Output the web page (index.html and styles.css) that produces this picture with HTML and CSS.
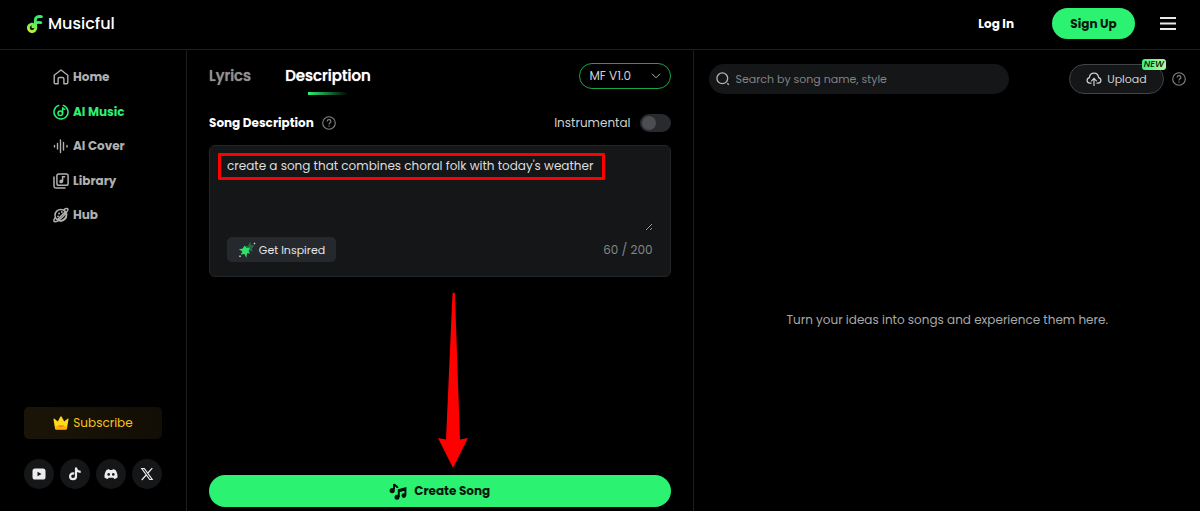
FILE: index.html
```html
<!DOCTYPE html>
<html lang="en">
<head>
    <meta charset="UTF-8">
    <meta name="viewport" content="width=device-width, initial-scale=1.0">
    <title>Musicful - AI Music</title>
    <link rel="stylesheet" href="styles.css">
</head>
<body>
    <header class="header">
        <a class="logo" href="#">
            <svg width="16" height="18" viewBox="0 0 16 18" fill="none">
                <defs>
                    <linearGradient id="logo-fill" x1="0" y1="18" x2="8" y2="0" gradientUnits="userSpaceOnUse">
                        <stop offset="0.1" stop-color="#c4f030"/>
                        <stop offset="0.8" stop-color="#35ee6e"/>
                    </linearGradient>
                </defs>
                <path d="M14.4 1.6C10.8 1.2 8.4 2 8.3 5.4L8.8 12.600a3.700 3.700 0 1 1-4.200-3.500c1.500-.2 2.300 1.300 1.300 2.700M13.800 7.600C12 7.200 9.800 7.300 8.400 8.400" stroke="url(#logo-fill)" stroke-width="2.900" stroke-linecap="round"/>
            </svg>
            <span>Musicful</span>
        </a>
        <div class="header-actions">
            <button class="btn-login">Log In</button>
            <button class="btn-signup">Sign Up</button>
            <button class="btn-menu" aria-label="Menu">
                <svg width="16" height="13" viewBox="0 0 16 13" stroke="#e8e8e8" stroke-width="1.800">
                    <path d="M0 1h16M0 6.500h16M0 12h16"/>
                </svg>
            </button>
        </div>
    </header>

    <div class="layout">
        <aside class="sidebar">
            <nav class="nav">
                <a class="nav-item" href="#">
                    <svg width="16" height="16" viewBox="0 0 16 16" fill="none" stroke="currentColor" stroke-width="1.4" stroke-linejoin="round">
                        <path d="M1.2 6.2 8 1l6.8 5.2v7.2q0 1.3-1.3 1.3h-2.6V10q0-1.500-1.500-1.500H6.6Q5.1 8.500 5.1 10v4.700H2.500q-1.300 0-1.300-1.300z"/>
                    </svg>
                    <span>Home</span>
                </a>
                <a class="nav-item active" href="#">
                    <svg width="16" height="16" viewBox="0 0 16 16" fill="none" stroke="currentColor" stroke-width="1.5" stroke-linecap="round">
                        <path d="M10.3 1.4A7 7 0 1 1 5.7 1.4M13.1 3.2l.5.6"/>
                        <circle cx="7.3" cy="9.2" r="2.3"/>
                        <path d="M9.6 9.2V3.3c.1 1.3 1 1.9 2.2 2"/>
                    </svg>
                    <span>AI Music</span>
                </a>
                <a class="nav-item" href="#">
                    <svg width="16" height="16" viewBox="0 0 16 16" stroke="currentColor" stroke-width="1.4" stroke-linecap="round">
                        <path d="M1.500 7.500v1.500M4.500 5.500v5.500M7.500 2v12.500M10.500 4.500v7.500M14 7.500v1.500"/>
                    </svg>
                    <span>AI Cover</span>
                </a>
                <a class="nav-item" href="#">
                    <svg width="16" height="16" viewBox="0 0 16 16" fill="none" stroke="currentColor" stroke-width="1.5" stroke-linecap="round">
                        <rect x="3.9" y="1" width="11.2" height="11.2" rx="1.8"/>
                        <path d="M1 4v9.3q0 1.7 1.7 1.7H12M9.6 8V3.8h2"/>
                        <circle cx="8.2" cy="8.4" r="1.1" fill="currentColor"/>
                    </svg>
                    <span>Library</span>
                </a>
                <a class="nav-item" href="#">
                    <svg width="16" height="16" viewBox="0 0 16 16" fill="none" stroke="currentColor" stroke-width="1.5" stroke-linecap="round">
                        <circle cx="7.8" cy="8.2" r="5.8"/>
                        <path d="M11 2.600c2-1.200 3.500-1.300 3.900-.6.900 1.700-8.500 12.500-13 12.800C.5 14.700.6 13 2 11M13.500 7c0 3.500-3 6-6 7M4.500 12.500 12.500 4.500"/>
                        <path d="M6 6.500h.1M8.800 5h.1M5 9.300h.1" stroke-width="1.800"/>
                    </svg>
                    <span>Hub</span>
                </a>
            </nav>

            <div class="sidebar-footer">
                <button class="btn-subscribe">
                    <svg width="16" height="14" viewBox="0 0 16 14">
                        <path d="M2 12.500 0.500 3.200q0-1 1-.5L4.800 5.400 7.300.8q.7-.9 1.400 0l2.500 4.600 3.300-2.700q1-.5 1 .5L14 12.500q-.2 1-1.200 1H3.200q-1 0-1.200-1z" fill="#ffd91c"/>
                        <path d="M2 10.500q6-1.500 12.200 0l-.2 2q-.2 1-1.200 1H3.200q-1 0-1.200-1z" fill="#ffb300"/>
                        <path d="M5.500 9.500q2.500 1.400 5 0" stroke="#f26b1d" stroke-width="1.400" fill="none"/>
                    </svg>
                    <span>Subscribe</span>
                </button>
                <div class="social">
                    <a href="#" aria-label="YouTube">
                        <svg width="14" height="14" viewBox="0 0 14 14">
                            <rect x="0.500" y="1.500" width="13" height="11" rx="2.600" fill="#ececec"/>
                            <path d="M5.500 4.700v4.600L9.500 7z" fill="#16181a"/>
                        </svg>
                    </a>
                    <a href="#" aria-label="TikTok">
                        <svg width="14" height="14" viewBox="0 0 14 14" fill="none" stroke="#ececec" stroke-width="2.200">
                            <path d="M6.200 6.600C3.500 6 1.900 7.800 2.100 9.600c.3 3.500 5.900 3.500 5.900-.3V.5M8 .8c.3 2.500 2 3.900 4.700 4"/>
                        </svg>
                    </a>
                    <a href="#" aria-label="Discord">
                        <svg width="14" height="14" viewBox="0 0 14 14">
                            <path d="M2.500 3 5 2l.6 1h2.800L9 2l2.500 1c1.500 2.200 2.200 4.800 2 7.400-1 .9-2 1.400-3.300 1.700l-.8-1.300H4.600l-.8 1.300C2.500 11.800 1.500 11.300.5 10.400.3 7.800 1 5.200 2.500 3z" fill="#ececec"/>
                            <circle cx="4.700" cy="7.400" r="1.300" fill="#16181a"/>
                            <circle cx="9.300" cy="7.400" r="1.300" fill="#16181a"/>
                        </svg>
                    </a>
                    <a href="#" aria-label="X">
                        <svg width="14" height="14" viewBox="0 0 14 14" fill="none" stroke="#ececec">
                            <path d="M1.800 1.500h2.500l7.900 11H9.700zM12.300 1.200 7.900 6M6.200 8l-4.500 5" stroke-width="1.200"/>
                        </svg>
                    </a>
                </div>
            </div>
        </aside>

        <main class="creator">
            <div class="creator-top">
                <div class="tabs" role="tablist">
                    <button class="tab" role="tab">Lyrics</button>
                    <button class="tab active" role="tab" aria-selected="true">Description</button>
                </div>
                <div class="model-select">
                    <select aria-label="Model">
                        <option>MF V1.0</option>
                    </select>
                    <svg width="10" height="6" viewBox="0 0 10 6" fill="none" stroke="#b0b0b0">
                        <path d="M1 .8 5 4.800 9 .8"/>
                    </svg>
                </div>
            </div>

            <div class="field-head">
                <label class="field-label" for="description">Song Description</label>
                <svg class="help" width="14" height="14" viewBox="0 0 14 14" fill="none" stroke="currentColor" stroke-width="1.100">
                    <circle cx="7" cy="7" r="6.300"/>
                    <path d="M5.100 5.500C5.200 3 8.900 3.100 8.900 5.400 8.900 6.800 7 6.800 7 8.400M7 9.600v1.200"/>
                </svg>
                <label class="instrumental">
                    <span>Instrumental</span>
                    <input type="checkbox" class="switch">
                </label>
            </div>

            <div class="prompt">
                <textarea id="description" maxlength="200" spellcheck="false">create a song that combines choral folk with today's weather</textarea>
                <div class="highlight"></div>
                <div class="prompt-footer">
                    <button class="btn-inspire">
                        <svg width="18" height="18" viewBox="0 0 18 18">
                            <path d="m12 1 1.400 3 3 .6-2.400 3 .6 3-3-.8-2.800 2V8L6 5.500l4-.8z" fill="#27684a"/>
                            <path d="m6.500 4.500 2 2.500 3.500-.3-1.500 3 1.500 2.800-3-.3L8.300 17l-1.800-4-3.700.5 1.500-3L.8 8.200l4-.7z" fill="#2fe06b"/>
                            <path d="M2 14.200l1 1-1 1-1-1zM16.500 1.500l1 1-1 1-1-1z" fill="#dcdcdc"/>
                        </svg>
                        <span>Get Inspired</span>
                    </button>
                    <span class="counter">60 / 200</span>
                </div>
            </div>

            <svg class="arrow" width="30" height="176" viewBox="0 0 30 176" fill="#fe0000">
                <path d="M14.500 1.500q1.200-2 2.400 0L22 147.500l8-1.500-15 30L0 146l8 1.500z"/>
            </svg>

            <button class="btn-create">
                <svg width="18" height="18" viewBox="0 0 18 18" fill="none" stroke="#06140b" stroke-width="2">
                    <path d="M5 7.500V2c.5 1.700 3.500 1.500 3.500 4M9.800 15V8l6.600-1.800v7.300M9.800 9.400l6.600-1.800"/>
                    <circle cx="3.200" cy="8.600" r="1.600" fill="#06140b"/>
                    <circle cx="8" cy="15.200" r="1.500" fill="#06140b"/>
                    <circle cx="14.800" cy="13.600" r="1.300" fill="#06140b"/>
                </svg>
                <span>Create Song</span>
            </button>
        </main>

        <section class="songs">
            <div class="songs-top">
                <label class="search">
                    <svg width="14" height="14" viewBox="0 0 14 14" fill="none" stroke="#b4b6b8" stroke-width="1.300">
                        <circle cx="6.300" cy="6.300" r="5.400"/>
                        <path d="m11.300 11.300 1.500 1.500"/>
                    </svg>
                    <input type="text" placeholder="Search by song name, style" aria-label="Search">
                </label>
                <div class="upload">
                    <button class="btn-upload">
                        <svg width="16" height="14" viewBox="0 0 16 14" fill="none" stroke="currentColor" stroke-width="1.200" stroke-linecap="round">
                            <path d="M5 11.200H4C.3 11 .2 6.500 3.400 5.600 4 -.4 12-.4 12.600 5.600c3.200.9 3.100 5.400-.6 5.600h-1M8 13.400V6.500M5.600 8.800 8 6.300l2.400 2.500"/>
                        </svg>
                        <span>Upload</span>
                    </button>
                    <span class="badge">NEW</span>
                    <svg class="help" width="14" height="14" viewBox="0 0 14 14" fill="none" stroke="currentColor" stroke-width="1.100">
                        <circle cx="7" cy="7" r="6.300"/>
                        <path d="M5.100 5.500C5.200 3 8.900 3.100 8.900 5.400 8.900 6.800 7 6.800 7 8.400M7 9.600v1.200"/>
                    </svg>
                </div>
            </div>
            <p class="empty">Turn your ideas into songs and experience them here.</p>
        </section>
    </div>
</body>
</html>
```
FILE: styles.css
```css
* {
    box-sizing: border-box;
}
body {
    margin: 0;
    min-height: 100vh;
    display: flex;
    flex-direction: column;
    background: #000;
    color: #fff;
    font-family: Poppins, Inter, sans-serif;
    font-size: 12px;
    line-height: 18px;
}
a {
    color: inherit;
    text-decoration: none;
}
button, input, select, textarea {
    font: inherit;
    color: inherit;
}
button {
    border: none;
    padding: 0;
    background: none;
    cursor: pointer;
}
svg {
    flex: none;
    display: block;
}

/* Header */
.header {
    display: flex;
    align-items: center;
    justify-content: space-between;
    height: 50px;
    padding: 0 24px 2px 27px;
    border-bottom: 1px solid #1c1f20;
}
.logo {
    display: flex;
    align-items: center;
    gap: 5px;
    font-size: 16px;
    font-weight: 500;
}
.header-actions {
    display: flex;
    align-items: center;
}
.btn-login {
    font-weight: 700;
}
.btn-signup {
    width: 83px;
    height: 31px;
    margin: 0 25px 0 38px;
    border-radius: 16px;
    background: #2cf272;
    color: #06140b;
    font-weight: 700;
}

/* Columns */
.layout {
    flex: 1;
    display: grid;
    grid-template-columns: 187px 1fr 1fr;
}
.sidebar, .creator {
    border-right: 1px solid #1c1f20;
}

/* Sidebar */
.sidebar {
    display: flex;
    flex-direction: column;
    justify-content: space-between;
    padding: 15px 24px 22px;
}
.nav {
    display: flex;
    flex-direction: column;
    justify-content: space-between;
    height: 162px;
    padding-left: 29px;
}
.nav-item {
    display: flex;
    align-items: center;
    gap: 4px;
    height: 24px;
    color: #b0b0b0;
    font-weight: 700;
}
.nav-item.active {
    color: #2cf272;
}
.btn-subscribe {
    display: flex;
    align-items: center;
    justify-content: center;
    gap: 4px;
    width: 100%;
    height: 32px;
    margin-bottom: 20px;
    border-radius: 5px;
    background: linear-gradient(90deg, #1b1508, #120e05);
    color: #f5c31c;
}
.social {
    display: flex;
    justify-content: space-between;
}
.social a {
    display: flex;
    align-items: center;
    justify-content: center;
    width: 30px;
    height: 30px;
    border-radius: 50%;
    background: #141618;
}

/* Song form */
.creator {
    position: relative;
    display: flex;
    flex-direction: column;
    padding: 13px 22px 4px;
}
.creator-top {
    display: flex;
    align-items: flex-start;
    justify-content: space-between;
}
.tabs {
    display: flex;
    gap: 34px;
}
.tab {
    height: 32px;
    padding-bottom: 6px;
    color: #929292;
    font-size: 15px;
    font-weight: 500;
    text-shadow: 0 0 1px currentColor;
}
.tab.active {
    color: #fff;
    background: linear-gradient(90deg, #2cf272, #000) center bottom / 40px 3px no-repeat;
}
.model-select {
    position: relative;
}
.model-select select {
    display: block;
    appearance: none;
    width: 92px;
    height: 26px;
    padding: 0 24px 0 10px;
    border: 1px solid #18a548;
    border-radius: 13px;
    background: #000;
    color: #d0d0d0;
}
.model-select svg {
    position: absolute;
    right: 10px;
    top: 10px;
    pointer-events: none;
}
.help {
    color: #858585;
}
.field-head {
    display: flex;
    align-items: center;
    gap: 8px;
    height: 20px;
    margin: 18px 0 12px;
}
.field-label {
    font-weight: 700;
}
.instrumental {
    display: flex;
    align-items: center;
    gap: 9px;
    margin-left: auto;
    color: #d0d0d0;
}
.switch {
    appearance: none;
    width: 31px;
    height: 18px;
    margin: 0;
    padding: 2px;
    border-radius: 9px;
    background: #282a2e;
}
.switch::before {
    content: "";
    display: block;
    width: 14px;
    height: 14px;
    border-radius: 50%;
    background: #4b4d52;
}
.prompt {
    position: relative;
    padding: 11px 17px 14px;
    border: 1px solid #222527;
    border-radius: 6px;
    background: #141618;
}
.prompt textarea {
    display: block;
    width: 100%;
    height: 74px;
    padding: 0;
    border: none;
    outline: none;
    resize: vertical;
    background: none;
    color: #dedede;
    color-scheme: dark;
}
.highlight {
    position: absolute;
    left: 8px;
    top: 7px;
    width: 387px;
    height: 27px;
    border: 3px solid #fe0000;
    border-radius: 1px;
    pointer-events: none;
}
.prompt-footer {
    display: flex;
    align-items: center;
    justify-content: space-between;
    margin-top: 6px;
}
.btn-inspire {
    display: flex;
    align-items: center;
    justify-content: center;
    gap: 3px;
    width: 109px;
    height: 25px;
    border-radius: 5px;
    background: #25282d;
    color: #e6e6e6;
    font-size: 11px;
}
.counter {
    color: #858585;
}
.arrow {
    position: absolute;
    left: 251px;
    bottom: 43px;
}
.btn-create {
    display: flex;
    align-items: center;
    justify-content: center;
    gap: 7px;
    height: 32px;
    margin-top: auto;
    border-radius: 16px;
    background: #2cf272;
    color: #06140b;
    font-weight: 700;
}

/* Song list */
.songs {
    display: flex;
    flex-direction: column;
    padding: 14px 14px 4px 15px;
}
.songs-top {
    display: flex;
    align-items: center;
    justify-content: space-between;
}
.search {
    display: flex;
    align-items: center;
    gap: 6px;
    width: 300px;
    height: 30px;
    padding: 0 7px;
    border-radius: 15px;
    background: #141618;
    font-size: 11px;
}
.search input {
    flex: 1;
    min-width: 0;
    padding: 0;
    border: none;
    outline: none;
    background: none;
}
.search input::placeholder {
    color: #808386;
}
.upload {
    position: relative;
    display: flex;
    align-items: center;
    gap: 8px;
}
.btn-upload {
    display: flex;
    align-items: center;
    justify-content: center;
    gap: 5px;
    width: 95px;
    height: 30px;
    border: 1px solid #414446;
    border-radius: 15px;
    background: #141618;
    color: #d0d0d0;
    font-size: 11px;
}
.badge {
    position: absolute;
    right: 20px;
    top: -5px;
    padding: 0 2px;
    border-radius: 3px;
    background: linear-gradient(90deg, #3df27c, #b5f79a);
    color: #06140b;
    font-size: 9px;
    font-style: italic;
    font-weight: 500;
    line-height: 11px;
}
.empty {
    margin: auto;
    padding-top: 38px;
    color: #a8a8a8;
}
```
